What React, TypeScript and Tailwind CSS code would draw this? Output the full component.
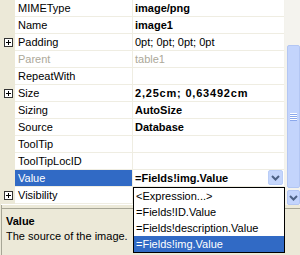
import React from "react";

type Row = {
  name: string;
  value: string;
  bold?: boolean;
  expand?: boolean;
  disabled?: boolean;
  selected?: boolean;
  wide?: boolean;
};

const rows: Row[] = [
  { name: "MIMEType", value: "image/png", bold: true },
  { name: "Name", value: "image1", bold: true },
  { name: "Padding", value: "0pt; 0pt; 0pt; 0pt", expand: true },
  { name: "Parent", value: "table1", disabled: true },
  { name: "RepeatWith", value: "" },
  { name: "Size", value: "2,25cm; 0,63492cm", bold: true, expand: true, wide: true },
  { name: "Sizing", value: "AutoSize", bold: true },
  { name: "Source", value: "Database", bold: true },
  { name: "ToolTip", value: "" },
  { name: "ToolTipLocID", value: "" },
  { name: "Value", value: "=Fields!img.Value", bold: true, selected: true },
  { name: "Visibility", value: "", expand: true },
];

function Chevron() {
  return (
    <svg width="9" height="6" viewBox="0 0 9 6">
      <polyline points="1,1 4.5,4.5 8,1" fill="none" stroke="#4d6185" strokeWidth="2" />
    </svg>
  );
}

function PlusBox() {
  return (
    <div className="relative w-[9px] h-[9px] border border-[#333] bg-white">
      <div className="absolute left-[1px] top-[3px] w-[5px] h-[1px] bg-black" />
      <div className="absolute left-[3px] top-[1px] w-[1px] h-[5px] bg-black" />
    </div>
  );
}

export default function App() {
  return (
    <div className="relative w-[300px] h-[255px] overflow-hidden bg-[#ece9d8] flex font-['Liberation_Sans',Arial,sans-serif] text-[11px] text-black">
      <div className="w-[1px] bg-[#ece9d8]" />
      <div className="w-[1px] bg-[#a7a696]" />
      <div className="flex-1 flex flex-col">
        <div className="flex h-[205px]">
          <div className="flex flex-col w-[283px] bg-white">
            {rows.map((r) => (
              <div key={r.name} className="flex h-[17px]">
                <div className="w-[14px] bg-[#ece9d8] flex items-center justify-center">
                  {r.expand ? <PlusBox /> : null}
                </div>
                <div
                  className={
                    r.selected
                      ? "w-[118px] h-[17px] border-b border-r border-[#efede2] bg-[#316ac5] text-white pl-[3px] leading-[16px] whitespace-nowrap"
                      : r.disabled
                      ? "w-[118px] h-[17px] border-b border-r border-[#efede2] text-[#aca899] pl-[3px] leading-[16px] whitespace-nowrap"
                      : "w-[118px] h-[17px] border-b border-r border-[#efede2] pl-[3px] leading-[16px] whitespace-nowrap"
                  }
                >
                  {r.name}
                </div>
                <div
                  className={
                    "flex-1 h-[17px] border-b border-[#efede2] pl-[2px] leading-[16px] whitespace-nowrap flex items-start " +
                    (r.disabled ? "text-[#aca899] " : "") +
                    (r.bold ? "font-bold " : "") +
                    (r.wide ? "tracking-[0.8px]" : "")
                  }
                >
                  <span className="flex-1">{r.value}</span>
                  {r.selected ? (
                    <div className="w-[15px] h-[15px] mr-[1px] rounded-[2px] border border-[#b9cdf7] bg-[#c5d6fc] flex items-center justify-center">
                      <Chevron />
                    </div>
                  ) : null}
                </div>
              </div>
            ))}
          </div>
          <div className="w-[1px] bg-[#f3f2ec]" />
          <div className="w-[15px] bg-[#f4f3ee] flex flex-col items-end">
            <div className="h-[45px]" />
            <div className="w-[13px] h-[143px] rounded-[2px] border border-[#b3c6f3] bg-[#c3d4fc] flex items-center justify-center">
              <div className="flex flex-col w-[7px]">
                <div className="h-[1px] bg-white" />
                <div className="h-[1px] bg-[#8ba8ec]" />
                <div className="h-[1px] bg-white" />
                <div className="h-[1px] bg-[#8ba8ec]" />
                <div className="h-[1px] bg-white" />
                <div className="h-[1px] bg-[#8ba8ec]" />
                <div className="h-[1px] bg-white" />
                <div className="h-[1px] bg-[#8ba8ec]" />
              </div>
            </div>
            <div className="h-[2px]" />
            <div className="w-[13px] h-[15px] rounded-[2px] border border-[#b3c6f3] bg-[#c3d4fc] flex items-center justify-center">
              <Chevron />
            </div>
          </div>
        </div>
        <div className="h-[3px]" />
        <div className="flex-1 border-t border-[#a7a696] pl-[5px] pt-[5px] leading-[15px]">
          <div className="font-bold">Value</div>
          <div>The source of the image.</div>
        </div>
      </div>

      <div className="absolute left-[133px] top-[187px] w-[152px] h-[66px] border border-black bg-white leading-[16px] whitespace-nowrap">
        <div className="h-[16px] pl-[2px]">&lt;Expression...&gt;</div>
        <div className="h-[16px] pl-[2px]">=Fields!ID.Value</div>
        <div className="h-[16px] pl-[2px]">=Fields!description.Value</div>
        <div className="h-[16px] pl-[2px] bg-[#316ac5] text-white">=Fields!img.Value</div>
      </div>
    </div>
  );
}
